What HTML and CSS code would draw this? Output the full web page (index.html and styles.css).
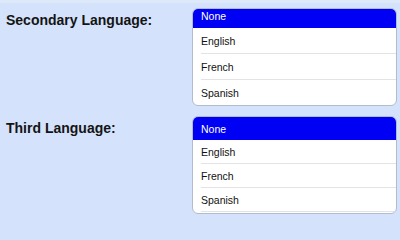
FILE: index.html
```html
<!DOCTYPE html>
<html>
<head>
<meta charset="utf-8">
<link rel="stylesheet" href="styles.css">
</head>
<body>
<div class="page">
  <div class="field first">
    <div class="label">Secondary Language:</div>
    <div class="picker">
      <div class="opt selected">None</div>
      <div class="opt">English</div>
      <div class="opt">French</div>
      <div class="opt last">Spanish</div>
    </div>
  </div>
  <div class="field second">
    <div class="label">Third Language:</div>
    <div class="picker">
      <div class="opt selected">None</div>
      <div class="opt">English</div>
      <div class="opt">French</div>
      <div class="opt">Spanish</div>
    </div>
  </div>
</div>
</body>
</html>
```

FILE: styles.css
```css
html, body {
  margin: 0;
  padding: 0;
  background: #d4e3fb;
}
body {
  font-family: "Liberation Sans", Arial, Helvetica, sans-serif;
  width: 400px;
  height: 218px;
  overflow: hidden;
}
.page {
  padding-top: 8px;
  box-sizing: border-box;
  display: flex;
  flex-direction: column;
  gap: 10px;
  background: linear-gradient(#dde8f8, #dde8f8) top left / 100% 3px no-repeat, #d4e3fb;
  height: 218px;
}
.field {
  display: flex;
  align-items: flex-start;
}
.label {
  flex: 0 0 192px;
  padding-left: 6px;
  box-sizing: border-box;
  font-size: 14px;
  font-weight: bold;
  color: #141414;
  line-height: 16px;
  padding-top: 4px;
}
.picker {
  flex: 0 0 205px;
  height: 98px;
  box-sizing: border-box;
  border: 1px solid #b3bccd;
  border-radius: 6px;
  background: #fff;
  overflow: hidden;
}
.opt {
  font-size: 10.5px;
  color: #111;
  padding-left: 8px;
  display: flex;
  align-items: center;
  position: relative;
}
.opt::after {
  content: "";
  position: absolute;
  left: 8px;
  right: 0;
  bottom: 0;
  height: 1px;
  background: #e3e3e6;
}
.opt.selected {
  background: #0000f5;
  color: #fff;
}
.opt.selected::after, .opt.last::after { display: none; }
.first .opt { height: 26px; }
.first .opt.selected { height: 19px; align-items: flex-start; padding-top: 1px; box-sizing: border-box; }
.first .opt.last { height: 25px; }
.second .opt { height: 24px; }
.second .opt.selected { height: 23px; }
```
